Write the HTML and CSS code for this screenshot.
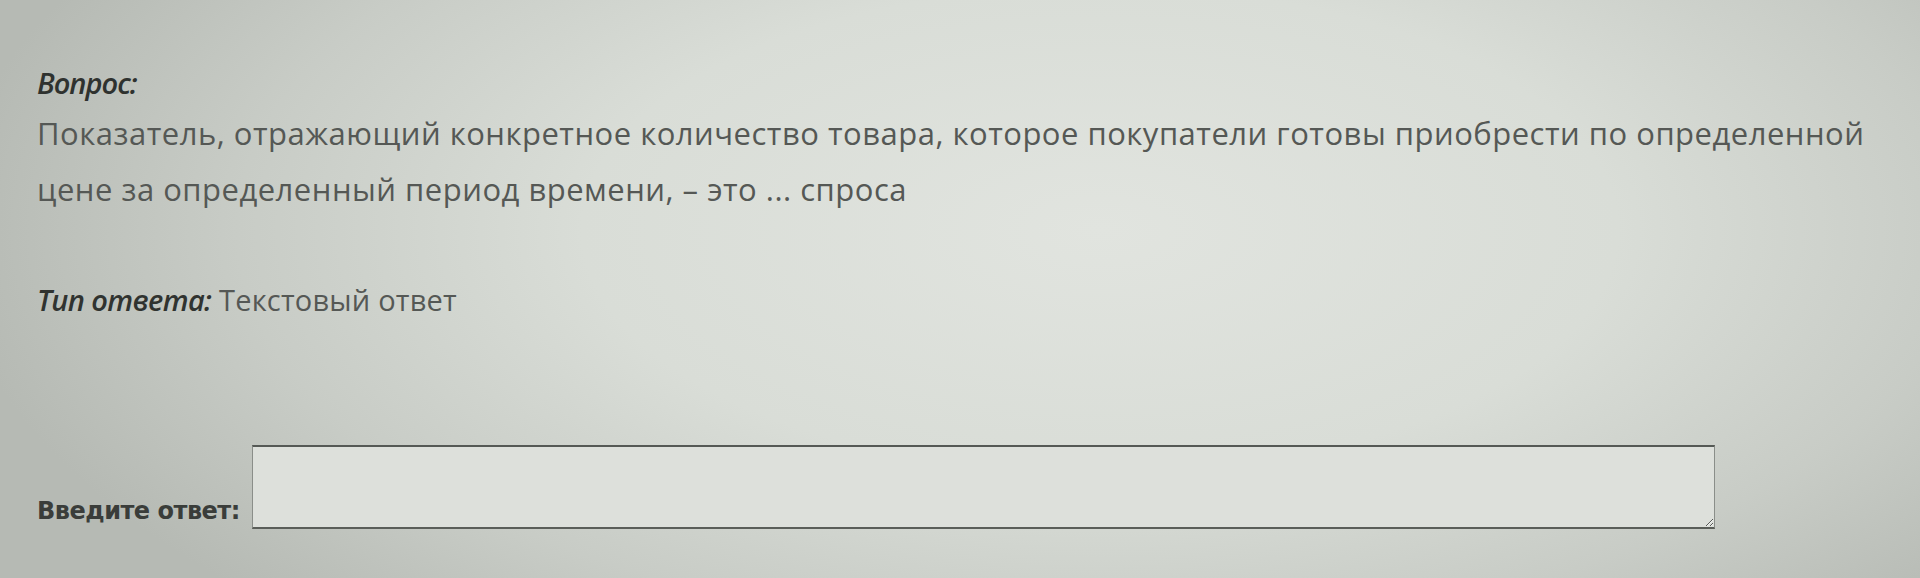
FILE: index.html
```html
<!DOCTYPE html>
<html lang="ru">
<head>
<meta charset="utf-8">
<title>Вопрос</title>
<link rel="stylesheet" href="styles.css">
</head>
<body>
<main class="page">
  <section class="question">
    <div class="q-title">Вопрос:</div>
    <p class="q-text">Показатель, отражающий конкретное количество товара, которое покупатели готовы приобрести по определенной цене за определенный период времени, – это ... спроса</p>
  </section>
  <div class="answer-type"><span class="at-label">Тип ответа:</span> Текстовый ответ</div>
  <form class="answer-row">
    <label class="answer-label" for="ans">Введите ответ:</label>
    <textarea id="ans" class="answer-input"></textarea>
  </form>
</main>
</body>
</html>
```
FILE: styles.css
```css
html, body {
  margin: 0;
  padding: 0;
  height: 100%;
}
body {
  width: 1920px;
  height: 578px;
  overflow: hidden;
  background:
    radial-gradient(ellipse 1150px 540px at 1100px 230px, #e1e4df 0%, #d9ddd7 45%, #c8ccc6 75%, #b6bab4 100%);
  font-family: "Open Sans", "Noto Sans", sans-serif;
  color: #4a4d4a;
}
.page {
  padding: 67px 0 0 37px;
}
.q-title {
  font-style: italic;
  font-weight: 600;
  font-size: 29px;
  line-height: 32px;
  letter-spacing: -1px;
  color: #2f322f;
}
.q-text {
  margin: 6px 0 0;
  width: 1875px;
  font-size: 31px;
  line-height: 56px;
  letter-spacing: 0.5px;
  font-weight: 400;
  color: #555855;
}
.answer-type {
  margin-top: 66px;
  font-size: 29px;
  line-height: 34px;
  color: #555855;
  letter-spacing: 0.2px;
}
.at-label {
  font-style: italic;
  font-weight: 600;
  letter-spacing: -0.6px;
  color: #303330;
}
.answer-row {
  margin-top: 128px;
  display: flex;
  align-items: flex-end;
  gap: 12px;
}
.answer-label {
  font-family: "DejaVu Sans", "Noto Sans", sans-serif;
  font-size: 24px;
  line-height: 28px;
  font-weight: 600;
  color: #3a3d3a;
  letter-spacing: -0.5px;
  padding-bottom: 4px;
}
.answer-input {
  width: 1463px;
  height: 84px;
  box-sizing: border-box;
  margin: 0;
  border-style: solid;
  border-width: 2px 1px 2px 1px;
  border-color: #555955 #8a8e89 #5a5e59 #8a8e89;
  background: #dde0db;
  resize: both;
  font: inherit;
}
```
